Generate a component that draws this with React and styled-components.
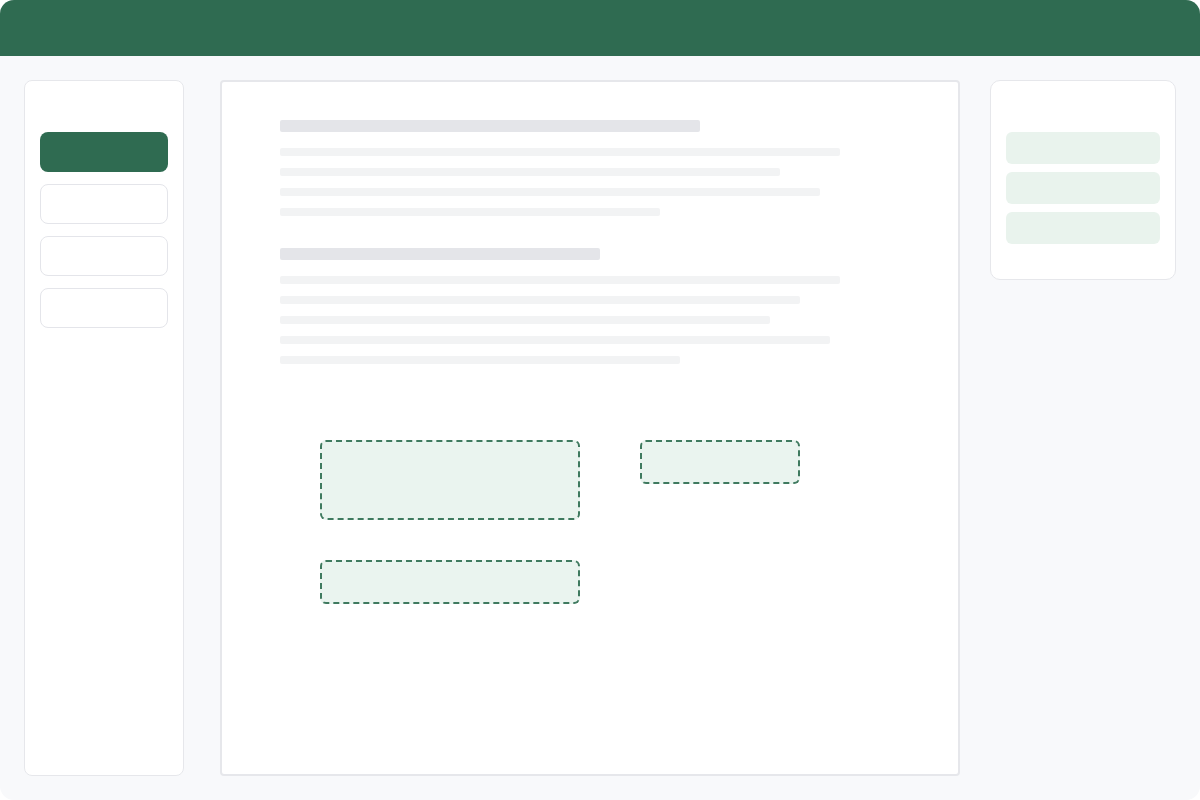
import React from "react";
import styled, { createGlobalStyle } from "styled-components";

const Global = createGlobalStyle`
  html, body {
    margin: 0;
    padding: 0;
    background: #ffffff;
    font-family: "Inter", "Liberation Sans", sans-serif;
  }
`;

const Frame = styled.div`
  width: 1200px;
  height: 800px;
  border-radius: 14px;
  overflow: hidden;
  background: #f8f9fb;
  display: flex;
  flex-direction: column;
`;

const Header = styled.header`
  height: 56px;
  flex-shrink: 0;
  background: #2f6b51;
`;

const Body = styled.div`
  flex: 1;
  display: flex;
  align-items: flex-start;
  padding: 24px 24px 24px 24px;
`;

const Sidebar = styled.aside`
  width: 160px;
  height: 696px;
  box-sizing: border-box;
  background: #ffffff;
  border: 1px solid #e6e7eb;
  border-radius: 8px;
  padding: 51px 15px 0;
  display: flex;
  flex-direction: column;
  gap: 12px;
`;

const NavItem = styled.div`
  height: 40px;
  box-sizing: border-box;
  border-radius: 8px;
  background: ${({ $active }) => ($active ? "#2f6b51" : "#ffffff")};
  border: ${({ $active }) => ($active ? "none" : "1px solid #e4e5ea")};
`;

const Main = styled.main`
  width: 740px;
  height: 696px;
  margin-left: 36px;
  box-sizing: border-box;
  background: #ffffff;
  border: 2px solid #e6e7eb;
  border-radius: 4px;
  padding: 38px 58px;
`;

const Section = styled.div`
  display: flex;
  flex-direction: column;
  gap: 12px;
  & + & {
    margin-top: 32px;
  }
`;

const Title = styled.div`
  width: ${({ $w }) => $w}px;
  height: 12px;
  border-radius: 2px;
  background: #e4e5e9;
  margin-bottom: 4px;
`;

const Line = styled.div`
  width: ${({ $w }) => $w}px;
  height: 8px;
  border-radius: 2px;
  background: #f2f3f4;
`;

const DropArea = styled.div`
  margin: 76px 0 0 40px;
  display: grid;
  grid-template-columns: 260px 160px;
  column-gap: 60px;
  row-gap: 40px;
  align-items: start;
`;

const DropZone = styled.div`
  height: ${({ $h }) => $h}px;
  box-sizing: border-box;
  border: 2px dashed #3f7a5f;
  border-radius: 6px;
  background: #eaf4ef;
`;

const Panel = styled.aside`
  width: 186px;
  height: 200px;
  margin-left: 30px;
  box-sizing: border-box;
  background: #ffffff;
  border: 1px solid #e6e7eb;
  border-radius: 10px;
  padding: 51px 15px 0;
  display: flex;
  flex-direction: column;
  gap: 8px;
`;

const PanelItem = styled.div`
  height: 32px;
  border-radius: 6px;
  background: #e9f3ed;
`;

const sections = [
  { title: 420, lines: [560, 500, 540, 380] },
  { title: 320, lines: [560, 520, 490, 550, 400] },
];

export default function App() {
  return (
    <>
      <Global />
      <Frame>
        <Header />
        <Body>
          <Sidebar>
            <NavItem $active />
            <NavItem />
            <NavItem />
            <NavItem />
          </Sidebar>
          <Main>
            {sections.map((s, i) => (
              <Section key={i}>
                <Title $w={s.title} />
                {s.lines.map((w, j) => (
                  <Line key={j} $w={w} />
                ))}
              </Section>
            ))}
            <DropArea>
              <DropZone $h={80} />
              <DropZone $h={44} />
              <DropZone $h={44} />
            </DropArea>
          </Main>
          <Panel>
            <PanelItem />
            <PanelItem />
            <PanelItem />
          </Panel>
        </Body>
      </Frame>
    </>
  );
}
